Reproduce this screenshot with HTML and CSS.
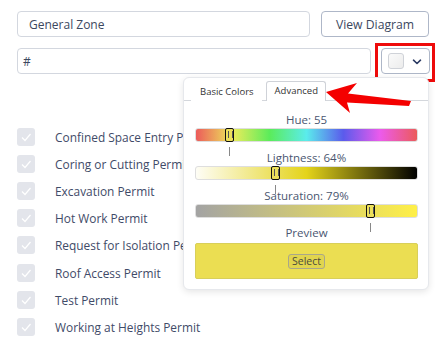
FILE: index.html
```html
<!DOCTYPE html>
<html>
<head>
<meta charset="utf-8">
<link rel="stylesheet" href="styles.css">
</head>
<body>
<div class="page">
  <div class="row row-top">
    <div class="input input-zone">General Zone</div>
    <button class="btn btn-diagram">View Diagram</button>
  </div>
  <div class="row row-color">
    <div class="input input-hex">#</div>
    <div class="color-btn-wrap">
      <button class="btn color-btn">
        <span class="swatch"></span>
        <svg class="chev" width="10" height="6" viewBox="0 0 10 6"><polyline points="1.5,1.2 5,4.5 8.5,1.2" fill="none" stroke="#2b3a63" stroke-width="1.6" stroke-linecap="round" stroke-linejoin="round"/></svg>
      </button>
      <span class="red-box"></span>
    </div>
  </div>

  <ul class="permits">
    <li><span class="cb"><svg width="18" height="18" viewBox="0 0 18 18"><polyline points="5,9.5 8,12.5 13.5,6" fill="none" stroke="#fff" stroke-width="1.2"/></svg></span>Confined Space Entry Permit</li>
    <li><span class="cb"><svg width="18" height="18" viewBox="0 0 18 18"><polyline points="5,9.5 8,12.5 13.5,6" fill="none" stroke="#fff" stroke-width="1.2"/></svg></span>Coring or Cutting Permit</li>
    <li><span class="cb"><svg width="18" height="18" viewBox="0 0 18 18"><polyline points="5,9.5 8,12.5 13.5,6" fill="none" stroke="#fff" stroke-width="1.2"/></svg></span>Excavation Permit</li>
    <li><span class="cb"><svg width="18" height="18" viewBox="0 0 18 18"><polyline points="5,9.5 8,12.5 13.5,6" fill="none" stroke="#fff" stroke-width="1.2"/></svg></span>Hot Work Permit</li>
    <li><span class="cb"><svg width="18" height="18" viewBox="0 0 18 18"><polyline points="5,9.5 8,12.5 13.5,6" fill="none" stroke="#fff" stroke-width="1.2"/></svg></span>Request for Isolation Permit</li>
    <li><span class="cb"><svg width="18" height="18" viewBox="0 0 18 18"><polyline points="5,9.5 8,12.5 13.5,6" fill="none" stroke="#fff" stroke-width="1.2"/></svg></span>Roof Access Permit</li>
    <li><span class="cb"><svg width="18" height="18" viewBox="0 0 18 18"><polyline points="5,9.5 8,12.5 13.5,6" fill="none" stroke="#fff" stroke-width="1.2"/></svg></span>Test Permit</li>
    <li><span class="cb"><svg width="18" height="18" viewBox="0 0 18 18"><polyline points="5,9.5 8,12.5 13.5,6" fill="none" stroke="#fff" stroke-width="1.2"/></svg></span>Working at Heights Permit</li>
  </ul>

  <div class="picker">
    <div class="tabs">
      <div class="tab">Basic Colors</div>
      <div class="tab active">Advanced</div>
    </div>
    <div class="picker-body">
      <div class="label">Hue: 55</div>
      <div class="bar bar-hue"><span class="thumb" style="left: 15.3%"></span><span class="tick" style="left: 15.3%"></span></div>
      <div class="label">Lightness: 64%</div>
      <div class="bar bar-light"><span class="thumb" style="left: 36%"></span><span class="tick" style="left: 36%"></span></div>
      <div class="label">Saturation: 79%</div>
      <div class="bar bar-sat"><span class="thumb" style="left: 79%"></span><span class="tick" style="left: 79%"></span></div>
      <div class="label label-preview">Preview</div>
      <div class="preview"><span class="select-btn">Select</span></div>
    </div>
  </div>

  <svg class="arrow" width="90" height="34" viewBox="322 80 90 34">
    <polygon points="326,92 357,83 348,93.5 411,101 409,106 347,102.5 350,113" fill="#f40000"/>
  </svg>
</div>
</body>
</html>
```

FILE: styles.css
```css
* { box-sizing: border-box; }
html, body { margin: 0; padding: 0; background: #fff; }
body {
  font-family: "Open Sans", "Liberation Sans", sans-serif;
  color: #3f4b5f;
  width: 439px;
  height: 358px;
  overflow: hidden;
}
.page {
  position: relative;
  padding: 10px 9px 0 17px;
}
.row { display: flex; align-items: stretch; }
.row-top { gap: 11px; height: 26px; margin-top: 1px; padding-right: 1px; }
.row-color { gap: 10px; height: 26px; margin-top: 11px; }
.input {
  border: 1px solid #d3d7df;
  border-radius: 4px;
  font-size: 12px;
  display: flex;
  align-items: center;
  color: #3c4860;
}
.input-zone { width: 293px; padding-left: 11px; }
.input-hex { width: 354px; padding-left: 5px; }
.btn {
  font-family: inherit;
  background: #fff;
  border: 1px solid #aeb7c8;
  border-radius: 4px;
  color: #3c4860;
  padding: 0;
  margin: 0;
}
.btn-diagram { width: 108px; font-size: 12.2px; }
.color-btn-wrap { position: relative; width: 49px; }
.color-btn {
  width: 49px; height: 26px;
  display: flex; align-items: center;
  padding-left: 6px;
}
.swatch {
  width: 16px; height: 16px;
  border: 1px solid #cfd2d8;
  border-radius: 3px;
  background: linear-gradient(135deg, #fafafa, #ececec);
}
.chev { margin-left: 8px; margin-top: 1px; }
.red-box {
  position: absolute;
  left: -6px; top: -5px;
  width: 60px; height: 39px;
  border: 3px solid #ee0b0b;
}
.permits {
  list-style: none;
  margin: 49px 0 0 0;
  padding: 0;
}
.permits li {
  display: flex;
  align-items: center;
  height: 27.2px;
  font-size: 11.9px;
  color: #3f4b68;
  white-space: nowrap;
}
.cb {
  width: 18px; height: 18px;
  border-radius: 3px;
  background: #e3e5eb;
  margin-right: 20px;
  display: flex;
}
.picker {
  position: absolute;
  left: 183px; top: 77px;
  width: 246px; height: 213px;
  background: #fff;
  border: 1px solid #e6e8ec;
  border-radius: 6px;
  box-shadow: 0 2px 7px rgba(0,0,0,0.10);
}
.tabs {
  display: flex;
  align-items: flex-end;
  height: 23px;
  padding-left: 7px;
  border-bottom: 1px solid #d4d7dc;
  gap: 4px;
}
.tab {
  font-size: 9.5px;
  color: #333;
  padding: 0 7px 0 8px;
  height: 19px;
  line-height: 18px;
  border: 1px solid transparent;
  border-bottom: none;
  border-radius: 3px 3px 0 0;
  margin-bottom: -1px;
  background: #fff;
}
.tab.active { border-color: #cfd2d8; height: 20px; }
.picker-body { padding: 11px 10px 0 11px; }
.label {
  font-size: 11.5px;
  line-height: 16px;
  text-align: center;
  color: #4a5670;
  margin-top: 8px;
}
.label:first-child { margin-top: 0; }
.bar {
  position: relative;
  height: 14px;
  border: 1px solid #dedede;
  border-radius: 3px;
}
.bar-hue {
  background: linear-gradient(to right,
    hsl(0,79%,64%), hsl(60,79%,64%), hsl(120,79%,64%), hsl(180,79%,64%),
    hsl(240,79%,64%), hsl(300,79%,64%), hsl(360,79%,64%));
}
.bar-light {
  background: linear-gradient(to right, hsl(55,79%,98%), hsl(55,79%,50%), hsl(55,79%,0%));
}
.bar-sat {
  background: linear-gradient(to right, hsl(55,0%,64%), hsl(55,100%,64%));
}
.thumb {
  position: absolute;
  top: -1px;
  width: 9px; height: 14px;
  margin-left: -4.5px;
  border: 1.5px solid #111;
  border-radius: 2px;
  background: hsl(55,79%,64%);
}
.thumb::after {
  content: "";
  position: absolute;
  left: 1.5px; top: 2px;
  width: 3px; height: 7px;
  border-left: 1px solid #555;
  border-right: 1px solid #555;
}
.tick {
  position: absolute;
  top: 18px;
  width: 1px; height: 9px;
  margin-left: -0.5px;
  background: #888;
}
.label-preview { margin-top: 7px; }
.preview {
  margin-top: 2px;
  height: 36px;
  border: 1px solid #d8cf5a;
  border-radius: 2px;
  background: hsl(55,79%,62%);
  display: flex;
  align-items: center;
  justify-content: center;
}
.select-btn {
  font-size: 10.5px;
  color: #4a4a3c;
  border: 1px solid #a9a78a;
  border-radius: 3px;
  padding: 0 3px;
  line-height: 13px;
  background: rgba(0,0,0,0.04);
}
.arrow {
  position: absolute;
  left: 322px; top: 80px;
}
```
